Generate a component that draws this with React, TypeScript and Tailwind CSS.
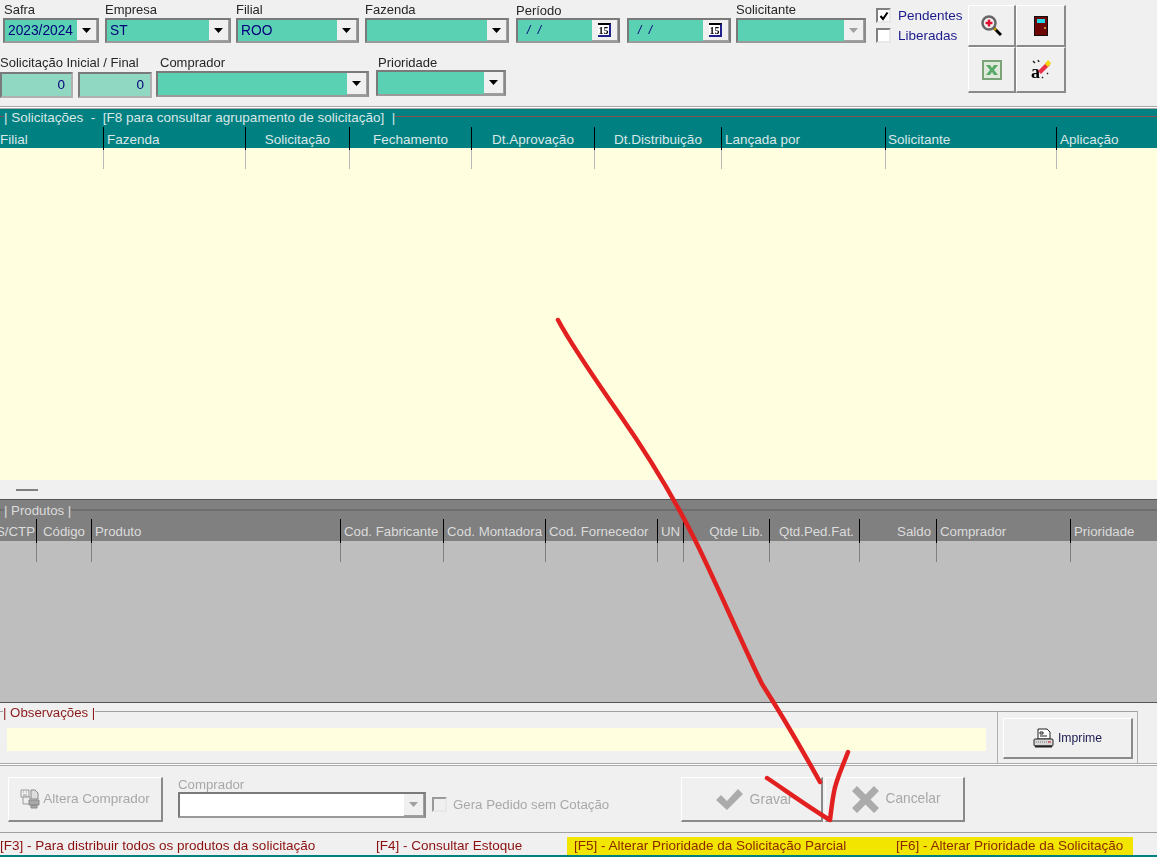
import React from 'react';

const ArrowDown = ({ muted = false }: { muted?: boolean }) => (
  <svg width="9" height="5" viewBox="0 0 9 5">
    <path d="M0 0h9L4.5 5z" fill={muted ? '#a0a0a0' : '#000'} />
  </svg>
);

const Combo = ({ value = '', className = '', muted = false, white = false }: { value?: string; className?: string; muted?: boolean; white?: boolean }) => (
  <div className={`flex border-2 border-t-[#7a7a7a] border-l-[#7a7a7a] border-r-[#8a8a8a] border-b-[#9a9a9a] ${white ? 'bg-white' : 'bg-[#5bd1b4]'} ${className}`}>
    <div className="flex-1 pl-[3px] text-[13.75px] leading-[22px] text-[#00007a] whitespace-nowrap">{value}</div>
    <div className="flex w-[20px] items-center justify-center border-b border-r border-[#a0a0a0] bg-[#f0f0f0]">
      <ArrowDown muted={muted} />
    </div>
  </div>
);

const DateBox = ({ className = '' }: { className?: string }) => (
  <div className={`flex border-2 border-[#7a7a7a] border-b-[#9a9a9a] bg-[#5bd1b4] ${className}`}>
    <div className="flex-1 pl-[9px] text-[12px] italic leading-[20px] tracking-[2px] text-[#00007a]">/ /</div>
    <div className="flex w-[26px] items-center justify-center border-b border-r border-[#a0a0a0] bg-[#f0f0f0]">
      <span className="h-[14px] w-[13px] border-b-2 border-r-2 border-t-2 border-b-[#20208a] border-r-[#20208a] border-t-black bg-white text-center font-['Liberation_Serif',serif] text-[10px] font-bold leading-[11px] text-black">15</span>
    </div>
  </div>
);

const NumBox = ({ className = '' }: { className?: string }) => (
  <div className={`border-2 border-[#7a7a7a] border-b-[#b0b0b0] border-r-[#b0b0b0] bg-[#90d8c2] pr-[6px] text-right text-[13.5px] leading-[22px] text-[#00007a] ${className}`}>0</div>
);

const Label = ({ children, className = '' }: { children: React.ReactNode; className?: string }) => (
  <div className={`h-[15px] whitespace-nowrap text-[13px] leading-[15px] text-[#262626] ${className}`}>{children}</div>
);

const Check = ({ checked = false, disabled = false }: { checked?: boolean; disabled?: boolean }) => (
  <span className={`flex h-[15px] w-[15px] flex-none items-center justify-center border-2 border-b-[#e8e8e8] border-r-[#e8e8e8] ${disabled ? 'border-l-[#9a9a9a] border-t-[#9a9a9a] bg-[#f0f0f0]' : 'border-l-[#808080] border-t-[#808080] bg-white'}`}>
    {checked && (
      <svg width="10" height="10" viewBox="0 0 10 10">
        <path d="M1.5 5l2.5 3L8.5 1.5" fill="none" stroke="#000" strokeWidth="2" />
      </svg>
    )}
  </span>
);

const ToolButton = ({ children, className = '' }: { children: React.ReactNode; className?: string }) => (
  <div className={`flex items-center justify-center border-b-2 border-r-2 border-l border-t border-b-[#8a8a8a] border-r-[#8a8a8a] border-l-white border-t-white bg-[#f0f0f0] ${className}`}>
    {children}
  </div>
);

const MagnifierIcon = () => (
  <svg width="21" height="21" viewBox="0 0 21 21">
    <path d="M12 12l8 8" stroke="#000" strokeWidth="3" />
    <path d="M13 13l2 2" stroke="#c9a000" strokeWidth="3" />
    <circle cx="8" cy="8" r="6.500" fill="#f4f4f4" stroke="#666" strokeWidth="2.500" />
    <path d="M8 4.500v7M4.500 8h7" stroke="#e01030" strokeWidth="2.500" />
  </svg>
);

const DoorIcon = () => (
  <svg width="14" height="20" viewBox="0 0 14 20">
    <rect x="0.500" y="0.500" width="13" height="19" fill="#6e0606" stroke="#101010" />
    <rect x="3" y="3" width="8" height="4" fill="#22d8e8" />
    <rect x="10" y="11" width="2" height="2" fill="#c09030" />
  </svg>
);

const ExcelIcon = () => (
  <svg width="20" height="20" viewBox="0 0 20 20">
    <rect x="1" y="1" width="18" height="18" fill="#dfe9dc" stroke="#7aa377" strokeWidth="2" />
    <path d="M4 5h4l2 3 2-3h4l-4 5 4 5h-4l-2-3-2 3H4l4-5z" fill="#58a868" />
  </svg>
);

const EraserIcon = () => (
  <svg width="22" height="24" viewBox="0 0 22 24">
    <text x="1" y="20" fontFamily="'Liberation Serif', serif" fontSize="18" fontWeight="700" fill="#000">a</text>
    <path d="M8 13L17 4l3 3-9 9z" fill="#e83048" />
    <path d="M15 6l3-4 3 3-3 4z" fill="#f4d800" />
    <path d="M3 3l2 2M8 2l1 2M17 15l1 1M12 19l1 1" stroke="#222" strokeWidth="1.500" />
  </svg>
);

const PrinterIcon = () => (
  <svg width="21" height="21" viewBox="0 0 21 21">
    <path d="M5 1h9l3 3v7H5z" fill="#fff" stroke="#222" />
    <path d="M7 4h3v2H7zM7 8h7" stroke="#222" fill="none" />
    <rect x="1" y="11" width="19" height="7" rx="1" fill="#d8d8d8" stroke="#222" />
    <path d="M3 14h14" stroke="#777" strokeDasharray="1 1" />
    <path d="M15 14h3" stroke="#d02020" />
    <path d="M2 18.500h17" stroke="#222" strokeWidth="2" />
  </svg>
);

const ChangeIcon = () => (
  <svg width="20" height="20" viewBox="0 0 20 20">
    <path d="M1 1h8v7H1z" fill="#eee" stroke="#9a9a9a" />
    <path d="M3 3h1M6 3h1M3 6h4" stroke="#9a9a9a" />
    <path d="M3 8h7v7H3z" fill="#eee" stroke="#9a9a9a" />
    <path d="M11 1h4l3 3v6h-7z" fill="#ddd" stroke="#8a8a8a" />
    <path d="M9 11h10v5H9zM11 16h6v3h-6z" fill="#a8a8a8" stroke="#8a8a8a" />
  </svg>
);

const HeaderColumn = ({ label, align = 'left', first = false, pad = '' }: { label: string; align?: 'left' | 'center' | 'right'; first?: boolean; pad?: string }) => (
  <div
    className={`overflow-hidden whitespace-nowrap leading-[25px] ${first ? '' : 'border-l border-black'} ${align === 'center' ? 'text-center' : align === 'right' ? 'flex justify-end' : 'text-left'} ${pad}`}
  >
    {label}
  </div>
);

const TickCell = ({ first = false, color }: { first?: boolean; color: string }) => (
  <div className={`h-[21px] ${first ? '' : `border-l ${color}`}`}>
    {!first && <div className="-ml-px h-[2px] w-px bg-black" />}
  </div>
);

const solicitacaoCols: { label: string; align?: 'left' | 'center' | 'right'; pad?: string }[] = [
  { label: 'Filial', pad: 'pl-0' },
  { label: 'Fazenda', pad: 'pl-[3px]' },
  { label: 'Solicitação', align: 'center' },
  { label: 'Fechamento', align: 'center' },
  { label: 'Dt.Aprovação', align: 'center' },
  { label: 'Dt.Distribuição', align: 'center' },
  { label: 'Lançada por', pad: 'pl-[3px]' },
  { label: 'Solicitante', pad: 'pl-[2px]' },
  { label: 'Aplicação', pad: 'pl-[3px]' },
];

const produtoCols: { label: string; align?: 'left' | 'center' | 'right'; pad?: string }[] = [
  { label: 'S/CTP', align: 'right', pad: 'pr-px' },
  { label: 'Código', align: 'center' },
  { label: 'Produto', pad: 'pl-[3px]' },
  { label: 'Cod. Fabricante', pad: 'pl-[3px]' },
  { label: 'Cod. Montadora', pad: 'pl-[3px]' },
  { label: 'Cod. Fornecedor', pad: 'pl-[3px]' },
  { label: 'UN', pad: 'pl-[3px]' },
  { label: 'Qtde Lib.', align: 'right', pad: 'pr-[6px]' },
  { label: 'Qtd.Ped.Fat.', align: 'right', pad: 'pr-[5px]' },
  { label: 'Saldo', align: 'right', pad: 'pr-[5px]' },
  { label: 'Comprador', pad: 'pl-[3px]' },
  { label: 'Prioridade', pad: 'pl-[3px]' },
];

const App = () => {
  return (
    <div className="relative h-[857px] w-[1157px] overflow-hidden bg-[#f0f0f0] font-['Liberation_Sans',Arial,sans-serif]">
      <div className="flex h-full flex-col blur-[0.4px]">
        {/* Filtros */}
        <div className="flex h-[106px] flex-none">
          <div className="w-[875px] flex-none">
            <div className="flex pt-[2px]">
              <div className="ml-[3px] w-[96px]">
                <Label className="pl-px">Safra</Label>
                <Combo value="2023/2024" className="mt-px h-[25px]" />
              </div>
              <div className="ml-[6px] w-[126px]">
                <Label>Empresa</Label>
                <Combo value="ST" className="mt-px h-[25px]" />
              </div>
              <div className="ml-[5px] w-[123px]">
                <Label>Filial</Label>
                <Combo value="ROO" className="mt-px h-[25px]" />
              </div>
              <div className="ml-[6px] w-[144px]">
                <Label>Fazenda</Label>
                <Combo className="mt-px h-[25px]" />
              </div>
              <div className="ml-[7px] w-[104px]">
                <Label className="mt-px">Período</Label>
                <DateBox className="h-[25px]" />
              </div>
              <div className="ml-[7px] w-[104px] pt-[16px]">
                <DateBox className="h-[25px]" />
              </div>
              <div className="ml-[5px] w-[130px]">
                <Label>Solicitante</Label>
                <Combo muted className="mt-px h-[25px]" />
              </div>
            </div>
            <div className="mt-[12px] flex">
              <div className="w-[73px]">
                <Label>Solicitação Inicial / Final</Label>
                <NumBox className="mt-[2px] h-[26px]" />
              </div>
              <div className="ml-[5px] w-[74px] pt-[17px]">
                <NumBox className="h-[26px]" />
              </div>
              <div className="ml-[4px] w-[213px]">
                <Label className="pl-[4px]">Comprador</Label>
                <Combo className="mt-px h-[26px]" />
              </div>
              <div className="ml-[7px] w-[130px]">
                <Label className="pl-[2px]">Prioridade</Label>
                <Combo className="h-[26px]" />
              </div>
            </div>
          </div>
          <div className="w-[93px] flex-none pl-px pt-[8px] text-[13.5px] text-[#1a1a8c]">
            <label className="flex h-[20px] gap-[7px]">
              <Check checked />
              <span className="leading-[15px]">Pendentes</span>
            </label>
            <label className="flex h-[20px] gap-[7px]">
              <Check />
              <span className="leading-[15px]">Liberadas</span>
            </label>
          </div>
          <div className="mt-[5px] grid h-[88px] w-[98px] flex-none grid-cols-[48px_50px] grid-rows-[42px_46px]">
            <ToolButton><MagnifierIcon /></ToolButton>
            <ToolButton><DoorIcon /></ToolButton>
            <ToolButton><ExcelIcon /></ToolButton>
            <ToolButton><EraserIcon /></ToolButton>
          </div>
        </div>
        <div className="h-[3px] flex-none border-y border-y-[#a8a8a8] bg-white" />

        {/* Solicitações */}
        <div className="flex-none bg-[#008080] text-[13.5px] text-[#d9e8e8]">
          <div className="flex h-[18px] items-center">
            <div className="mt-[-3px] h-px w-[4px] bg-[#8a5050]" />
            <span className="whitespace-pre leading-[18px]">| Solicitações  -  [F8 para consultar agrupamento de solicitação]  |</span>
            <div className="mt-[-3px] h-px flex-1 bg-[#8a5050]" />
          </div>
          <div className="grid h-[21px] grid-cols-[103px_142px_104px_122px_123px_127px_164px_171px_1fr]">
            {solicitacaoCols.map((col, i) => (
              <HeaderColumn key={col.label} label={col.label} align={col.align} pad={col.pad} first={i === 0} />
            ))}
          </div>
        </div>
        <div className="h-[332px] flex-none bg-[#ffffe0]">
          <div className="grid grid-cols-[103px_142px_104px_122px_123px_127px_164px_171px_1fr]">
            {solicitacaoCols.map((col, i) => (
              <TickCell key={col.label} first={i === 0} color="border-[#b8b8b8]" />
            ))}
          </div>
        </div>

        {/* Divisor */}
        <div className="flex h-[19px] flex-none items-center bg-[#f0f0f0] pl-[16px]">
          <div className="h-[2px] w-[22px] bg-[#808080]" />
        </div>

        {/* Produtos */}
        <div className="flex-none border-t border-[#555] bg-[#808080] text-[13.25px] text-[#dcdcdc]">
          <div className="flex h-[19px] items-center">
            <div className="h-[2px] w-[4px] bg-[#6e6e6e]" />
            <span className="pt-[2px] leading-[19px]">| Produtos |</span>
            <div className="h-[2px] flex-1 bg-[#6e6e6e]" />
          </div>
          <div className="grid h-[22px] grid-cols-[36px_55px_249px_103px_102px_112px_26px_86px_90px_77px_134px_1fr]">
            {produtoCols.map((col, i) => (
              <HeaderColumn key={col.label} label={col.label} align={col.align} pad={col.pad} first={i === 0} />
            ))}
          </div>
        </div>
        <div className="h-[162px] flex-none border-b border-[#555] bg-[#bebebe]">
          <div className="grid grid-cols-[36px_55px_249px_103px_102px_112px_26px_86px_90px_77px_134px_1fr]">
            {produtoCols.map((col, i) => (
              <TickCell key={col.label} first={i === 0} color="border-[#808080]" />
            ))}
          </div>
        </div>

        {/* Observações */}
        <div className="flex h-[60px] flex-none">
          <div className="w-[997px] flex-none pt-[2px]">
            <div className="flex h-[16px] items-center text-[13.25px] text-[#8b1a1a]">
              <div className="mt-[-3px] h-px w-[3px] bg-[#a0a0a0]" />
              <span className="leading-[16px]">| Observações |</span>
              <div className="mt-[-3px] h-px flex-1 bg-[#a0a0a0]" />
            </div>
            <div className="ml-[7px] mt-[7px] h-[23px] w-[979px] bg-[#ffffe0]" />
          </div>
          <div className="mt-[8px] h-[52px] w-[141px] flex-none border-x border-t border-x-[#b0b0b0] border-t-[#a0a0a0] pl-[5px] pt-[6px]">
            <ToolButton className="h-[41px] w-[130px] gap-[4px] text-[12.25px] text-[#1c1c50]">
              <PrinterIcon />
              <span>Imprime</span>
            </ToolButton>
          </div>
        </div>
        <div className="h-[3px] flex-none border-y border-y-[#a8a8a8] bg-white" />

        {/* Ações */}
        <div className="flex h-[66px] flex-none text-[13.25px] text-[#a8a8a8]">
          <ToolButton className="ml-[8px] mt-[11px] h-[45px] w-[155px] gap-[3px] text-[13.5px]">
            <ChangeIcon />
            <span>Altera Comprador</span>
          </ToolButton>
          <div className="ml-[15px] w-[248px] pt-[11px]">
            <div className="h-[15px] leading-[15px]">Comprador</div>
            <Combo muted white className="h-[26px]" />
          </div>
          <div className="w-[255px] flex-none pl-[6px] pt-[31px]">
            <div className="flex h-[16px] gap-[6px]">
              <Check disabled />
              <span className="whitespace-nowrap leading-[16px]">Gera Pedido sem Cotação</span>
            </div>
          </div>
          <ToolButton className="mt-[11px] h-[45px] w-[142px] gap-[7px] pl-[5px]">
            <svg width="27" height="21" viewBox="0 0 27 21">
              <path d="M0 11l5-5 6 6L22 0l5 5-16 16z" fill="#ababab" />
            </svg>
            <span className="text-[14px]">Gravar</span>
          </ToolButton>
          <ToolButton className="ml-[2px] mt-[11px] h-[45px] w-[140px] gap-[6px] pl-[4px]">
            <svg width="27" height="27" viewBox="0 0 27 27">
              <path d="M0 5l5-5 8.500 8.500L22 0l5 5-8.500 8.500L27 22l-5 5-8.500-8.500L5 27l-5-5 8.500-8.500z" fill="#ababab" />
            </svg>
            <span className="text-[13.75px]">Cancelar</span>
          </ToolButton>
        </div>

        {/* Status */}
        <div className="h-[1px] flex-none bg-[#a0a0a0]" />
        <div className="flex h-[22px] flex-none pt-[4px] text-[13.5px] leading-[18px] text-[#8b0f0f]">
          <span className="w-[376px] flex-none whitespace-nowrap">[F3] - Para distribuir todos os produtos da solicitação</span>
          <span className="w-[191px] flex-none whitespace-nowrap">[F4] - Consultar Estoque</span>
          <div className="flex w-[566px] flex-none whitespace-nowrap bg-[#f2e600] pl-[7px] text-[#8b2a00]">
            <span className="w-[322px] flex-none">[F5] - Alterar Prioridade da Solicitação Parcial</span>
            <span>[F6] - Alterar Prioridade da Solicitação</span>
          </div>
        </div>
        <div className="h-[2px] flex-none bg-[#008080]" />
      </div>

      {/* Seta desenhada por cima da tela */}
      <svg className="pointer-events-none absolute left-0 top-0" width="1157" height="857" viewBox="0 0 1157 857" fill="none">
        <path
          d="M558 320C566 335 590 372 620 415C650 458 675 500 695 540C715 580 745 650 762 684C780 712 805 755 820 782"
          stroke="#e32020"
          strokeWidth="4.500"
          strokeLinecap="round"
        />
        <path
          d="M848 752C842 768 836 780 834 792C832 802 831 812 830 820C810 808 785 790 767 778"
          stroke="#e32020"
          strokeWidth="4.500"
          strokeLinecap="round"
          strokeLinejoin="round"
        />
      </svg>
    </div>
  );
};

export default App;
